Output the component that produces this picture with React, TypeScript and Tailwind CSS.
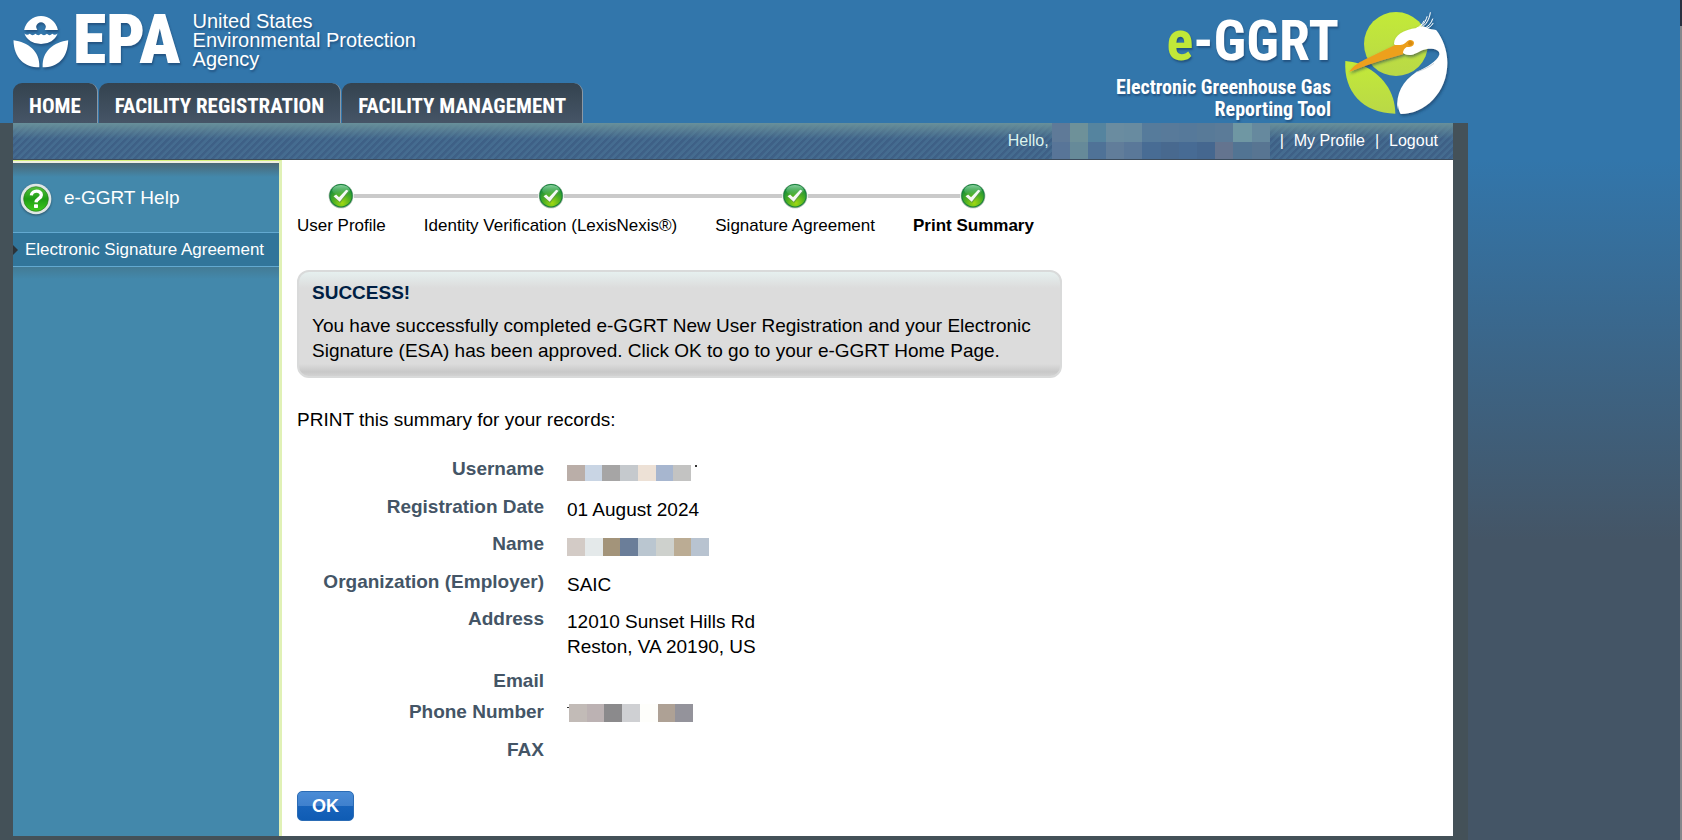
import * as React from 'react';
import { clsx } from 'clsx';

const TABS = ['HOME', 'FACILITY REGISTRATION', 'FACILITY MANAGEMENT'];

const STEPS = [
  { label: 'User Profile' },
  { label: 'Identity Verification (LexisNexis®)' },
  { label: 'Signature Agreement' },
  { label: 'Print Summary', current: true },
];

const HELLO_TOP = [
  'bg-[#5f7a98]',
  'bg-[#6e9199]',
  'bg-[#55849f]',
  'bg-[#6a8ca0]',
  'bg-[#688ba0]',
  'bg-[#567b9b]',
  'bg-[#587a9a]',
  'bg-[#56799a]',
  'bg-[#587a98]',
  'bg-[#5b7b98]',
  'bg-[#6f97a3]',
  'bg-[#66899e]',
];

const HELLO_BOTTOM = [
  'bg-[#587598]',
  'bg-[#668a99]',
  'bg-[#4f7297]',
  'bg-[#617d9a]',
  'bg-[#5a7899]',
  'bg-[#486c94]',
  'bg-[#48698f]',
  'bg-[#476b94]',
  'bg-[#45678f]',
  'bg-[#64748f]',
  'bg-[#527493]',
  'bg-[#587592]',
];

const USERNAME = [
  'bg-[#baaea8]',
  'bg-[#c9d5e4]',
  'bg-[#a6a5a5]',
  'bg-[#c5c9cd]',
  'bg-[#ede1d6]',
  'bg-[#a7b6cf]',
  'bg-[#c3c3c2]',
];

const NAME = [
  'bg-[#d3cbc6]',
  'bg-[#e4e9ea]',
  'bg-[#a3947a]',
  'bg-[#6b7e99]',
  'bg-[#bac6d0]',
  'bg-[#ced1cd]',
  'bg-[#bbac94]',
  'bg-[#b8c3d0]',
];

const PHONE = [
  'bg-[#c2bbb7]',
  'bg-[#bcb2b3]',
  'bg-[#8b8a8c]',
  'bg-[#cfd0d3]',
  'bg-[#fefefb]',
  'bg-[#aea195]',
  'bg-[#94939b]',
];

function Mosaic({ cells, className }: { cells: string[]; className: string }) {
  return (
    <span className={clsx('flex', className)}>
      {cells.map((cell, i) => (
        <span key={i} className={clsx('flex-1', cell)} />
      ))}
    </span>
  );
}

function EpaFlower() {
  return (
    <svg
      viewBox="40 32 168 166"
      className="h-[55px] w-[56px] shrink-0 drop-shadow-[1px_2px_1px_rgba(20,50,90,0.5)]"
      fill="#fff"
      aria-hidden="true"
    >
      <path d="M73 83A52 52 0 0 1 175 83H135A14 14 0 1 0 113 83Z" />
      <path d="M74 94Q82 101 90 95Q99 103 107 95Q116 103 124 95Q133 103 142 95Q150 103 158 95Q166 101 174 94A52 44 0 0 1 74 94Z" />
      <path d="M41 114C84 120 121 145 119 196C74 196 42 168 41 114Z" />
      <path d="M206 114C164 120 126 145 129 196C174 196 205 168 206 114Z" />
    </svg>
  );
}

function HeronLogo() {
  return (
    <svg
      viewBox="730 30 321 324"
      className="h-[108px] w-[107px] shrink-0"
      aria-hidden="true"
    >
      <defs>
        <linearGradient id="leaf" x1="0" y1="0" x2="0" y2="1">
          <stop offset="0" stopColor="#c3ea38" />
          <stop offset="1" stopColor="#b9d847" />
        </linearGradient>
        <filter id="soft" x="-10%" y="-10%" width="125%" height="125%">
          <feDropShadow dx="3" dy="5" stdDeviation="4" floodColor="#0f2f50" floodOpacity="0.6" />
        </filter>
      </defs>
      <circle cx="889" cy="132" r="96" fill="url(#leaf)" />
      <path
        d="M737 183C752 185 765 187 779 191C850 222 886 275 887 341C790 340 731 275 737 183Z"
        fill="url(#leaf)"
      />
      <g filter="url(#soft)">
        <path
          d="M883 132C884 105 912 89 951 84C962 78 976 78 988 86C998 88 1004 88 1010 91C1028 114 1043 150 1043 188C1043 278 975 342 903 342C899 336 896 328 895 316L893 328C889 280 908 244 950 216C982 201 1012 184 1019 164C1021 151 1004 145 982 147C964 149 953 161 934 165C920 166 910 162 906 154Z"
          fill="#fff"
        />
        <path
          d="M955 86C970 76 978 65 982 50M963 84C980 74 988 60 992 38M972 86C986 80 995 70 999 57M950 85C960 80 968 73 973 63M978 86C988 84 996 78 1000 70"
          fill="none"
          stroke="#fff"
          strokeWidth="3"
          strokeLinecap="round"
        />
        <path
          d="M748 216C760 198 776 188 794 179L886 135C902 136 914 134 921 125C928 117 942 119 943 128C943 138 934 142 921 141C914 145 909 152 910 163L850 180C810 192 780 204 748 216Z"
          fill="#eda01f"
        />
      </g>
      <circle cx="932" cy="130" r="7" fill="#d88b10" />
      <path d="M950 216C975 208 990 200 1003 190" fill="none" stroke="#b9c3cc" strokeWidth="2" />
    </svg>
  );
}

function CheckBadge() {
  return (
    <svg viewBox="0 0 78 80" className="h-[26px] w-[26px] shrink-0" aria-hidden="true">
      <defs>
        <radialGradient id="badge" cx="0.55" cy="0.85" r="0.8">
          <stop offset="0" stopColor="#a0d911" />
          <stop offset="0.5" stopColor="#4fb022" />
          <stop offset="1" stopColor="#138a3c" />
        </radialGradient>
        <linearGradient id="gloss" x1="0" y1="0" x2="0" y2="1">
          <stop offset="0" stopColor="#b5e8c0" stopOpacity="0.75" />
          <stop offset="1" stopColor="#5cc27a" stopOpacity="0.1" />
        </linearGradient>
      </defs>
      <circle cx="39" cy="40" r="38" fill="#a8b8a8" />
      <circle cx="39" cy="39" r="36" fill="#14803a" />
      <circle cx="39" cy="39" r="33" fill="url(#badge)" />
      <ellipse cx="39" cy="22" rx="27" ry="16" fill="url(#gloss)" />
      <path d="M17 44L25 38L34 47L56 23L64 27L36 62Z" fill="#5b8f4d" opacity="0.6" />
      <path d="M16 41L24 35L33 44L55 21L62 24L35 58Z" fill="#f6f8f6" />
    </svg>
  );
}

function HelpBadge() {
  return (
    <svg
      viewBox="0 0 96 96"
      className="h-8 w-8 shrink-0 drop-shadow-[0_1px_1px_rgba(0,0,0,0.4)]"
      aria-hidden="true"
    >
      <defs>
        <linearGradient id="help" x1="0" y1="0" x2="0" y2="1">
          <stop offset="0" stopColor="#53c13c" />
          <stop offset="0.5" stopColor="#1f9d14" />
          <stop offset="1" stopColor="#3ecb1c" />
        </linearGradient>
      </defs>
      <circle cx="48" cy="48" r="46" fill="#dfe6e4" />
      <circle cx="48" cy="48" r="37" fill="url(#help)" stroke="#2b7a1e" strokeWidth="2" />
      <path
        d="M34 37C35 21 64 20 64 36C64 47 49 47 48 58"
        fill="none"
        stroke="#fff"
        strokeWidth="10"
      />
      <rect x="42" y="64" width="12" height="11" rx="2" fill="#fff" />
    </svg>
  );
}

function SummaryRow({
  label,
  height,
  children,
}: {
  label: string;
  height: string;
  children?: React.ReactNode;
}) {
  return (
    <tr className={clsx('align-top', height)}>
      <th scope="row" className="w-[247px] pr-0 text-right font-bold text-[#445566]">
        {label}
      </th>
      <td className="pt-[3px] pl-[23px]">{children}</td>
    </tr>
  );
}

export default function App() {
  return (
    <div className="flex min-h-screen bg-[#445566] bg-[linear-gradient(#3276ab_160px,#445566_540px)] font-['Liberation_Sans',Arial,sans-serif] text-black">
      <div className="flex min-w-0 flex-1 flex-col">
        <div className="flex w-full max-w-[1468px] flex-1 flex-col">
          {/* Banner */}
          <header className="flex h-[123px] items-start justify-between bg-[#3276ab] pr-[18px] pl-[13px] text-white">
            <div className="flex h-full flex-col justify-between">
              <div className="flex h-[72px] items-center pt-2">
                <EpaFlower />
                <span className="ml-1 font-['Roboto_Condensed','Roboto','Liberation_Sans',sans-serif] text-[68px] leading-[56px] font-black text-shadow-[1px_2px_2px_rgba(20,50,90,0.5)]">
                  EPA
                </span>
                <span className="ml-3 text-[20px] leading-[19px] text-shadow-[1px_2px_2px_rgba(20,50,90,0.5)]">
                  United States
                  <br />
                  Environmental Protection
                  <br />
                  Agency
                </span>
              </div>
              <nav className="flex gap-px">
                {TABS.map((tab) => (
                  <a
                    key={tab}
                    href="#"
                    className="flex h-10 items-center rounded-t-[9px] border-r border-[#8b98a5] bg-linear-to-b from-[#34434f] to-[#465567] px-4 pt-2 font-['Roboto_Condensed','Roboto','Liberation_Sans',sans-serif] text-[21px] font-bold whitespace-nowrap"
                  >
                    {tab}
                  </a>
                ))}
              </nav>
            </div>
            <div className="flex items-start gap-1 pt-2.5">
              <div className="text-right font-['Roboto_Condensed','Roboto','Liberation_Sans',sans-serif] font-bold text-shadow-[1px_2px_2px_rgba(20,50,90,0.5)]">
                <div className="text-[56px] leading-[62px]">
                  <span className="text-[#c1e838]">e</span>-GGRT
                </div>
                <div className="mt-1 pr-2 text-[20px] leading-[22px]">
                  Electronic Greenhouse Gas
                  <br />
                  Reporting Tool
                </div>
              </div>
              <HeronLogo />
            </div>
          </header>

          <div className="flex flex-1 flex-col bg-[#445158] pr-[15px] pb-1 pl-[13px]">
            {/* User bar */}
            <div className="flex h-[37px] items-start justify-end border-b border-[#3c4c5c] bg-[linear-gradient(#68909a_0px,#68909a00_16px),repeating-linear-gradient(135deg,#3e6086_0px,#3e6086_2px,#456c90_3px,#456c90_5px)] pr-[15px] text-[16px] leading-[35px] text-white">
              <span className="pr-[3px] text-[#dcf3ec]">Hello,</span>
              <span className="flex w-[218px] flex-col">
                <Mosaic cells={HELLO_TOP} className="h-[19px]" />
                <Mosaic cells={HELLO_BOTTOM} className="h-[17px]" />
              </span>
              <span className="px-2.5">|</span>
              <a href="#">My Profile</a>
              <span className="px-2.5">|</span>
              <a href="#">Logout</a>
            </div>

            <div className="flex flex-1">
              {/* Sidebar */}
              <aside className="w-[269px] shrink-0 border-t border-r-3 border-t-[#d6f07c] border-r-[#e0f1b6] bg-[#4388ab] text-white">
                <div className="border-t-2 border-[#efeee2] bg-[linear-gradient(#4a6774_0px,#4388ab_14px)]">
                  <a
                    href="#"
                    className="flex h-[70px] items-center gap-3 border-b border-[#63a9d0] pt-0.5 pl-[7px] text-[19px]"
                  >
                    <HelpBadge />
                    e-GGRT Help
                  </a>
                </div>
                <a
                  href="#"
                  className="flex h-[34px] items-center gap-[7px] border-b border-[#63a9d0] bg-[#31759a] text-[17px] whitespace-nowrap"
                >
                  <svg viewBox="0 0 5 10" className="h-2.5 w-[5px]" aria-hidden="true">
                    <path d="M0 0L5 5L0 10Z" fill="#2c3338" />
                  </svg>
                  Electronic Signature Agreement
                </a>
                <div className="h-3 bg-linear-to-b from-[#437b95] to-[#4388ab]" />
              </aside>

              <main className="min-w-0 flex-1 bg-white px-[15px] pt-[23px] pb-[14px] text-[19px] leading-[25px]">
                <ol className="-ml-[19px] flex text-[17px] leading-6">
                  {STEPS.map((step, i) => (
                    <li key={step.label} className="flex flex-col">
                      <div className="flex items-center">
                        <span className={clsx('h-1 flex-1', i > 0 && 'bg-[#cacaca]')} />
                        <CheckBadge />
                        <span
                          className={clsx('h-1 flex-1', i < STEPS.length - 1 && 'bg-[#cacaca]')}
                        />
                      </div>
                      <span
                        className={clsx(
                          'mt-[5px] px-[19px] whitespace-nowrap',
                          step.current && 'font-bold'
                        )}
                      >
                        {step.label}
                      </span>
                    </li>
                  ))}
                </ol>

                <section className="mt-8 h-[108px] max-w-[765px] rounded-xl border-2 border-[#d9dada] bg-[linear-gradient(#e6f0ef_0px,#dcdcdc_16px,#dcdcdc_92px,#c8c8c8_100px,#d2d2d2_104px)] px-[13px] pt-2">
                  <h1 className="font-bold text-[#001f44]">SUCCESS!</h1>
                  <p className="mt-2">
                    You have successfully completed e-GGRT New User Registration and your
                    Electronic Signature (ESA) has been approved. Click OK to go to your e-GGRT
                    Home Page.
                  </p>
                </section>

                <p className="mt-[29px]">PRINT this summary for your records:</p>

                <table className="mt-6">
                  <tbody>
                    <SummaryRow label="Username" height="h-[38px]">
                      <span className="flex items-start pt-1.5">
                        <Mosaic cells={USERNAME} className="h-4 w-[124px]" />
                        <span className="ml-1 h-0.5 w-0.5 bg-[#333333]" />
                      </span>
                    </SummaryRow>
                    <SummaryRow label="Registration Date" height="h-[37px]">
                      01 August 2024
                    </SummaryRow>
                    <SummaryRow label="Name" height="h-[38px]">
                      <span className="flex pt-1">
                        <Mosaic cells={NAME} className="h-[18px] w-[142px]" />
                      </span>
                    </SummaryRow>
                    <SummaryRow label="Organization (Employer)" height="h-[37px]">
                      SAIC
                    </SummaryRow>
                    <SummaryRow label="Address" height="h-[62px]">
                      12010 Sunset Hills Rd
                      <br />
                      Reston, VA 20190, US
                    </SummaryRow>
                    <SummaryRow label="Email" height="h-[31px]" />
                    <SummaryRow label="Phone Number" height="h-[38px]">
                      <span className="flex items-start pt-0.5">
                        <span className="mt-[3px] h-px w-0.5 bg-[#333333]" />
                        <Mosaic cells={PHONE} className="h-[18px] w-[124px]" />
                      </span>
                    </SummaryRow>
                    <SummaryRow label="FAX" height="h-[38px]" />
                  </tbody>
                </table>

                <button
                  type="button"
                  className="mt-4 block h-[30px] w-[57px] rounded-[5px] border border-[#2b6cb5] bg-[linear-gradient(#4a8cd6_0%,#3f80cd_50%,#1763bb_51%,#0f5cb4_100%)] text-[18px] leading-7 font-bold text-white"
                >
                  OK
                </button>
              </main>
            </div>
          </div>
        </div>
      </div>

      {/* Scrollbar edge */}
      <div className="flex w-0.5 flex-col bg-[#85878c]">
        <div className="h-[26px] bg-[#2a3140]" />
      </div>
    </div>
  );
}
